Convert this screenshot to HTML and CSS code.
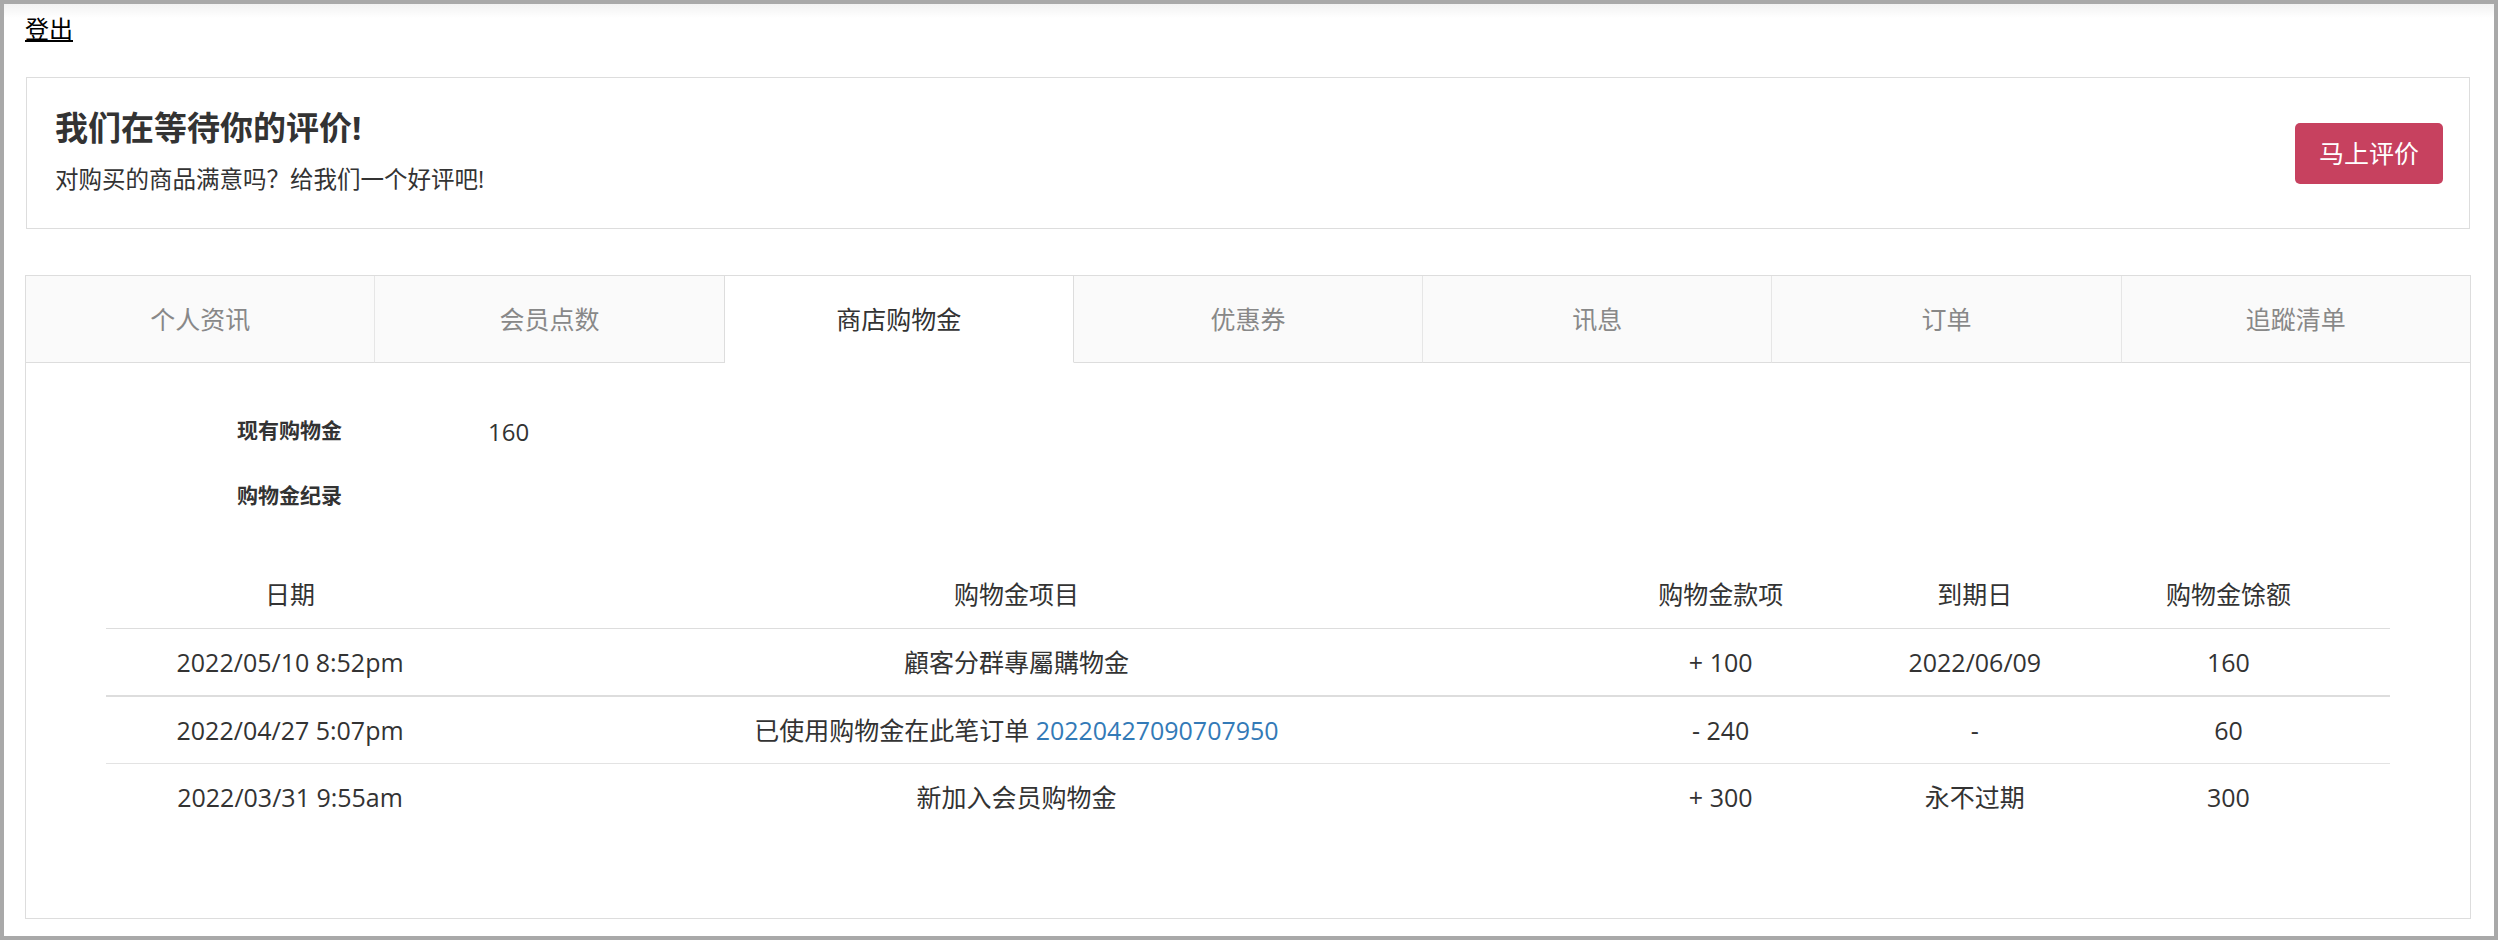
FILE: index.html
```html
<!DOCTYPE html>
<html lang="zh">
<head>
<meta charset="utf-8">
<link rel="stylesheet" href="styles.css">
</head>
<body>
<div class="page">
  <div class="top-links"><a href="#" class="logout">登出</a></div>

  <div class="review-banner">
    <div class="review-text">
      <h3>我们在等待你的评价!</h3>
      <p>对购买的商品满意吗？给我们一个好评吧!</p>
    </div>
    <button class="review-btn">马上评价</button>
  </div>

  <div class="member-panel">
    <ul class="tabs">
      <li>个人资讯</li>
      <li>会员点数</li>
      <li class="active">商店购物金</li>
      <li>优惠券</li>
      <li>讯息</li>
      <li>订单</li>
      <li>追蹤清单</li>
    </ul>
    <div class="tab-body">
      <div class="credit-row">
        <label>现有购物金</label>
        <span class="credit-value">160</span>
      </div>
      <div class="credit-row">
        <label>购物金纪录</label>
      </div>

      <table class="credit-table">
        <colgroup>
          <col class="col-date">
          <col class="col-item">
          <col class="col-amount">
          <col class="col-expire">
          <col class="col-balance">
        </colgroup>
        <thead>
          <tr>
            <th>日期</th>
            <th>购物金项目</th>
            <th>购物金款项</th>
            <th>到期日</th>
            <th>购物金馀额</th>
          </tr>
        </thead>
        <tbody>
          <tr class="first-row">
            <td>2022/05/10 8:52pm</td>
            <td>顧客分群專屬購物金</td>
            <td>+ 100</td>
            <td>2022/06/09</td>
            <td>160</td>
          </tr>
          <tr>
            <td>2022/04/27 5:07pm</td>
            <td>已使用购物金在此笔订单 <a href="#">20220427090707950</a></td>
            <td>- 240</td>
            <td>-</td>
            <td>60</td>
          </tr>
          <tr class="last-row">
            <td>2022/03/31 9:55am</td>
            <td>新加入会员购物金</td>
            <td>+ 300</td>
            <td>永不过期</td>
            <td>300</td>
          </tr>
        </tbody>
      </table>
    </div>
  </div>
</div>
</body>
</html>
```

FILE: styles.css
```css
html {
  background-color: #a9a9a9;
}

body {
  margin: 4px;
  height: 932px;
  background: linear-gradient(#f2f2f2, #fff 14px);
  font-family: "Open Sans", "Noto Sans CJK SC", sans-serif;
  font-size: 25px;
  line-height: 36px;
  color: #333;
  overflow: hidden;
}

.page {
  padding: 7px 23px 0 21px;
}

.top-links {
  height: 36px;
  font-size: 24px;
}

.logout {
  color: #000;
  text-decoration: underline;
}

.review-banner {
  display: flex;
  align-items: center;
  justify-content: space-between;
  margin: 30px 1px 0 1px;
  padding: 31px 26px 31px 28px;
  border: 1px solid #ddd;
  background-color: #fff;
}

.review-text h3 {
  margin: 0 0 14px 0;
  font-size: 33px;
  line-height: 38px;
  font-weight: bold;
  color: #333;
}

.review-text p {
  margin: 0;
  font-size: 23.5px;
  line-height: 36px;
}

.review-btn {
  background-color: #c7415f;
  color: #fff;
  border: none;
  border-radius: 5px;
  padding: 12px 24px 13px 24px;
  font-family: "Open Sans", "Noto Sans CJK SC", sans-serif;
  font-size: 25px;
  line-height: 36px;
}

.member-panel {
  margin-top: 46px;
  border: 1px solid #ddd;
  background-color: #fff;
}

.tabs {
  display: flex;
  margin: 0;
  padding: 0;
  list-style: none;
}

.tabs li {
  flex: 1;
  height: 86px;
  line-height: 86px;
  text-align: center;
  color: #888;
  background-color: #fafafa;
  border-right: 1px solid #e6e6e6;
  border-bottom: 1px solid #ddd;
}

.tabs li:last-child {
  border-right: none;
}

.tabs li.active {
  background-color: #fff;
  color: #333;
  border-bottom-color: #fff;
  border-right-color: #ddd;
}

.tabs li:nth-child(2) {
  border-right-color: #ddd;
}

.tab-body {
  padding: 45px 80px 88px 80px;
}

.credit-row {
  display: grid;
  grid-template-columns: 236px auto;
  column-gap: 146px;
  align-items: center;
  height: 44px;
  margin-bottom: 21px;
}

.credit-row label {
  text-align: right;
  font-size: 21px;
  font-weight: bold;
  color: #333;
}

.credit-value {
  font-size: 24px;
  padding-top: 3px;
}

.credit-table {
  width: 100%;
  margin-top: 43px;
  border-collapse: collapse;
  table-layout: fixed;
  text-align: center;
}

.col-date { width: 368px; }
.col-item { width: 1084px; }
.col-amount { width: 324px; }
.col-expire { width: 184px; }
.col-balance { width: 323px; }

.credit-table th {
  font-weight: normal;
  padding: 16px 0;
  border-bottom: 1px solid #ddd;
}

.credit-table td {
  padding: 15px 0;
  border-bottom: 1px solid #e3e3e3;
}

.credit-table tr.first-row td {
  border-bottom: 2px solid #ddd;
}

.credit-table tr.last-row td {
  border-bottom: none;
}

.credit-table a {
  color: #337ab7;
  text-decoration: none;
}
```
